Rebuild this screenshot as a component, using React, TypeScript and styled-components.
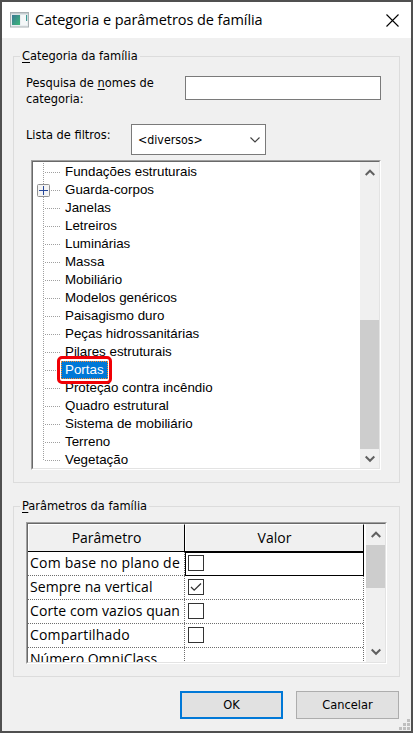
import React from 'react';
import styled, { createGlobalStyle } from 'styled-components';

const Global = createGlobalStyle`
  *{box-sizing:border-box}
  body{margin:0;background:#fff}
`;

const Window = styled.div`
  width: 413px;
  height: 733px;
  border: 2px solid #505050;
  background: #f0f0f0;
  display: flex;
  flex-direction: column;
  position: relative;
  overflow: hidden;
  color: #000;
  font: 12.7px/16px 'DejaVu Sans Condensed', 'DejaVu Sans', sans-serif;
`;
const TitleBar = styled.header`
  height: 36px;
  flex: none;
  background: #fff;
  display: flex;
  align-items: center;
  padding: 0 12px 0 8px;
`;
const Title = styled.h1`
  margin: 0 auto 0 6px;
  font: 400 14.5px/20px 'Open Sans', sans-serif;
  letter-spacing: -0.06px;
  white-space: nowrap;
`;
const Group = styled.fieldset<{ $h: number; $top: number }>`
  margin: ${p => p.$top}px 11px 0;
  padding: 0;
  min-width: 0;
  height: ${p => p.$h}px;
  flex: none;
  border: 1px solid #dcdcdc;
`;
const Legend = styled.legend`
  margin-left: 6px;
  padding: 0 2px;
  height: 16px;
  line-height: 16px;
  white-space: nowrap;
`;
const Key = styled.span`
  text-decoration: underline;
  text-underline-offset: 2px;
  text-decoration-thickness: 1px;
`;
const Field = styled.div<{ $h: number; $top: number }>`
  display: flex;
  align-items: flex-start;
  height: ${p => p.$h}px;
  margin-top: ${p => p.$top}px;
  padding-left: 12px;
`;
const Label = styled.label<{ $w: number; $top?: number }>`
  width: ${p => p.$w}px;
  flex: none;
  margin-top: ${p => p.$top ?? 0}px;
  white-space: nowrap;
`;
const Input = styled.input`
  width: 196px;
  height: 24px;
  padding: 0 4px;
  border: 1px solid #7a7a7a;
  border-radius: 0;
  background: #fff;
  outline: none;
`;
const Select = styled.div`
  width: 135px;
  height: 31px;
  border: 1px solid #7a7a7a;
  background: #fff;
  display: flex;
  align-items: center;
  justify-content: space-between;
  padding: 0 5px 0 6px;
  font-size: 12.3px;
`;
const Sunken = styled.div<{ $w: number; $h: number; $m: string }>`
  width: ${p => p.$w}px;
  height: ${p => p.$h}px;
  margin: ${p => p.$m};
  border: 1px solid;
  border-color: #a0a0a0 #fff #fff #a0a0a0;
`;
const SunkenInner = styled.div`
  height: 100%;
  border: 1px solid;
  border-color: #696969 #e3e3e3 #e3e3e3 #696969;
  background: #fff;
  display: flex;
  overflow: hidden;
`;
const Tree = styled.ul`
  list-style: none;
  flex: 1;
  margin: 0;
  padding: 1px 0 0 10px;
  font: 13.35px/18px 'Liberation Sans', Arial, sans-serif;
`;
const dotsX = 'repeating-linear-gradient(90deg,#a0a0a0 0 1px,transparent 1px 2px)';
const dotsY = 'repeating-linear-gradient(180deg,#a0a0a0 0 1px,transparent 1px 2px)';
const Item = styled.li<{ $last?: boolean }>`
  height: 18px;
  display: flex;
  align-items: center;
  position: relative;
  background-image: ${dotsX}, ${dotsY};
  background-size: 16px 1px, 1px ${p => (p.$last ? 9 : 18)}px;
  background-position: 2px 9px, 0 0;
  background-repeat: no-repeat;
`;
const ItemText = styled.span<{ $on?: boolean }>`
  margin-left: 18px;
  height: 18px;
  padding: 0 4px;
  white-space: nowrap;
  position: relative;
  color: ${p => (p.$on ? '#fff' : '#000')};
  background: ${p => (p.$on ? '#0078d7' : 'transparent')};
  outline: ${p => (p.$on ? '1px dotted #ff8728' : 'none')};
  outline-offset: -1px;
`;
const Callout = styled.span`
  position: absolute;
  z-index: 2;
  inset: -5px -4px -5px;
  border: 3px solid #f00005;
  border-radius: 5px;
`;
const Expander = styled.svg`
  position: absolute;
  left: -6px;
  top: 3px;
`;
const ScrollBar = styled.div`
  width: 19px;
  flex: none;
  background: #f0f0f0;
  display: flex;
  flex-direction: column;
  justify-content: space-between;
`;
const ScrollEnd = styled.div<{ $h: number }>`
  height: ${p => p.$h}px;
  display: flex;
  justify-content: center;
  align-items: center;
`;
const Thumb = styled.div<{ $h: number; $top: number }>`
  height: ${p => p.$h}px;
  margin-top: ${p => p.$top}px;
  margin-bottom: auto;
  background: #cdcdcd;
`;
const Grid = styled.div`
  width: 336px;
  flex: none;
  margin-right: 2px;
  font: 14px/20px 'Open Sans', sans-serif;
`;
const HeadRow = styled.div`
  display: grid;
  grid-template-columns: 157px 179px;
  height: 28px;
  border-bottom: 1px solid #000;
`;
const HeadCell = styled.div`
  background: #f0f0f0;
  border-top: 1px solid #fff;
  border-left: 1px solid #fff;
  border-right: 1px solid #000;
  text-align: center;
  line-height: 26px;
`;
const gridX = 'repeating-linear-gradient(90deg,#6e6e6e 0 1px,transparent 1px 2px)';
const gridY = 'repeating-linear-gradient(180deg,#6e6e6e 0 1px,transparent 1px 2px)';
const Row = styled.div`
  display: grid;
  grid-template-columns: 157px 179px;
  height: 24px;
  background: ${gridX} 0 100% / 100% 1px no-repeat;
`;
const Cell = styled.div<{ $focus?: boolean; $spacing?: number }>`
  display: flex;
  align-items: center;
  padding: 0 0 2px 2px;
  white-space: nowrap;
  overflow: hidden;
  letter-spacing: ${p => p.$spacing ?? 0}px;
  background: ${gridY} 100% 0 / 1px 100% no-repeat;
  box-shadow: ${p => (p.$focus ? 'inset 0 0 0 1px #000' : 'none')};
`;
const CheckBox = styled.span`
  width: 16px;
  height: 16px;
  margin-left: 1px;
  border: 1px solid #333;
  background: #fff;
  display: flex;
`;
const Actions = styled.footer`
  display: flex;
  gap: 13px;
  justify-content: flex-end;
  margin: 14px 12px 0 0;
`;
const Button = styled.button<{ $primary?: boolean }>`
  width: 103px;
  height: 28px;
  padding: 0;
  border: ${p => (p.$primary ? '2px solid #0078d7' : '1px solid #adadad')};
  border-radius: 0;
  background: #e1e1e1;
  color: #000;
  font: inherit;
`;
const Grip = styled.svg`
  position: absolute;
  right: 1px;
  bottom: 1px;
`;

const Arrow = ({ down }: { down?: boolean }) => (
  <svg width="10" height="8" viewBox="0 0 10 8">
    <path d={down ? 'M.7 1.5 5 5.8 9.3 1.5' : 'M.7 6 5 1.7 9.3 6'} fill="none" stroke="#606060" strokeWidth="2" />
  </svg>
);

const categories = [
  'Fundações estruturais', 'Guarda-corpos', 'Janelas', 'Letreiros', 'Luminárias', 'Massa',
  'Mobiliário', 'Modelos genéricos', 'Paisagismo duro', 'Peças hidrossanitárias',
  'Pilares estruturais', 'Portas', 'Proteção contra incêndio', 'Quadro estrutural',
  'Sistema de mobiliário', 'Terreno', 'Vegetação',
];

const params: { name: string; spacing: number; checked?: boolean; focus?: boolean; text?: boolean }[] = [
  { name: 'Com base no plano de', spacing: 0.2, focus: true },
  { name: 'Sempre na vertical', spacing: 0.06, checked: true },
  { name: 'Corte com vazios quan', spacing: 0.08 },
  { name: 'Compartilhado', spacing: 0.16 },
  { name: 'Número OmniClass', spacing: 0, text: true },
];

export default function App() {
  return (
    <>
      <Global />
      <Window>
        <TitleBar>
          <svg width="19" height="16" viewBox="0 0 19 16">
            <defs>
              <linearGradient id="pane" x1="0" y1="0" x2="1" y2="1">
                <stop offset="0" stopColor="#3b7894" />
                <stop offset="1" stopColor="#3bb878" />
              </linearGradient>
            </defs>
            <rect x=".5" y=".5" width="18" height="14.5" fill="#e9eef0" stroke="#a8b0b3" />
            <rect x="1" y="1" width="17" height="1.3" fill="#c4ccd0" />
            <rect x="2" y="3" width="8" height="10" fill="url(#pane)" />
            <rect x="11" y="3" width="6" height="10" fill="#f4f7f8" />
            <rect x="16" y="3" width="1.2" height="6" fill="#3f9a95" />
          </svg>
          <Title>Categoria e parâmetros de família</Title>
          <svg width="13" height="13" viewBox="0 0 13 13">
            <path d="m.5.5 12 12m0-12-12 12" stroke="#000" strokeWidth="1.1" />
          </svg>
        </TitleBar>

        <Group $top={10} $h={435}>
          <Legend><Key>C</Key>ategoria da família</Legend>
          <Field $top={12} $h={48}>
            <Label $w={159} $top={-1}>Pesquisa de <Key>n</Key>omes de<br />categoria:</Label>
            <Input />
          </Field>
          <Field $top={0} $h={36}>
            <Label $w={105} $top={3}>Lista de filtros:</Label>
            <Select>
              &lt;diversos&gt;
              <svg width="10" height="6" viewBox="0 0 10 6">
                <path d="M.5.5 5 5 9.5.5" fill="none" stroke="#404040" strokeWidth="1.1" />
              </svg>
            </Select>
          </Field>
          <Sunken $w={350} $h={310} $m="0 0 0 17px">
            <SunkenInner>
              <Tree>
                {categories.map((c, i) => (
                  <Item key={c} $last={i === categories.length - 1}>
                    {c === 'Guarda-corpos' && (
                      <Expander width="13" height="13" viewBox="0 0 13 13">
                        <rect x=".5" y=".5" width="12" height="12" rx="1" fill="#f4f4f4" stroke="#919191" />
                        <path d="M2 6.5h9M6.5 2v9" stroke="#27489a" />
                      </Expander>
                    )}
                    <ItemText $on={c === 'Portas'}>{c}{c === 'Portas' && <Callout />}</ItemText>
                  </Item>
                ))}
              </Tree>
              <ScrollBar>
                <ScrollEnd $h={21}><Arrow /></ScrollEnd>
                <Thumb $top={137} $h={129} />
                <ScrollEnd $h={19}><Arrow down /></ScrollEnd>
              </ScrollBar>
            </SunkenInner>
          </Sunken>
        </Group>

        <Group $top={15} $h={179}>
          <Legend><Key>P</Key>arâmetros da família</Legend>
          <Sunken $w={361} $h={142} $m="8px 0 0 12px">
            <SunkenInner>
              <Grid>
                <HeadRow>
                  <HeadCell>Parâmetro</HeadCell>
                  <HeadCell>Valor</HeadCell>
                </HeadRow>
                {params.map(p => (
                  <Row key={p.name}>
                    <Cell $spacing={p.spacing}>{p.name}</Cell>
                    <Cell $focus={p.focus}>
                      {!p.text && (
                        <CheckBox>
                          {p.checked && (
                            <svg width="14" height="14" viewBox="0 0 14 14">
                              <path d="m2 7 3.2 3.2L12 3.5" fill="none" stroke="#333" strokeWidth="1.3" />
                            </svg>
                          )}
                        </CheckBox>
                      )}
                    </Cell>
                  </Row>
                ))}
              </Grid>
              <ScrollBar>
                <ScrollEnd $h={21}><Arrow /></ScrollEnd>
                <Thumb $top={0} $h={43} />
                <ScrollEnd $h={21}><Arrow down /></ScrollEnd>
              </ScrollBar>
            </SunkenInner>
          </Sunken>
        </Group>

        <Actions>
          <Button $primary>OK</Button>
          <Button>Cancelar</Button>
        </Actions>
        <Grip width="11" height="11" viewBox="0 0 11 11" fill="#bfbfbf">
          <path d="M8 0h3v3H8zM4 4h3v3H4zM8 4h3v3H8zM0 8h3v3H0zM4 8h3v3H4zM8 8h3v3H8z" />
        </Grip>
      </Window>
    </>
  );
}
